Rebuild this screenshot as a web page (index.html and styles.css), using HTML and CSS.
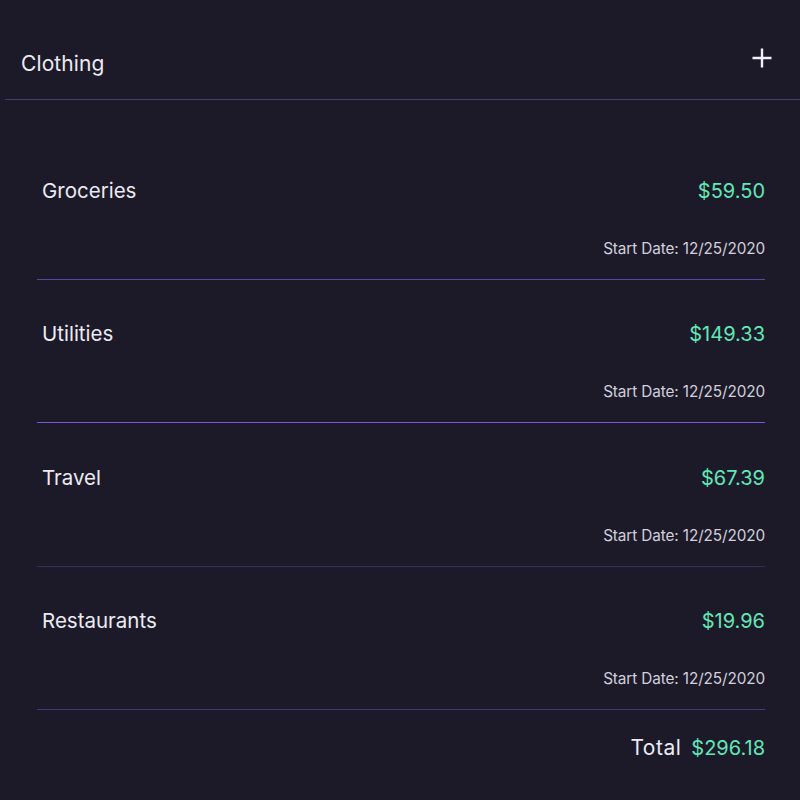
FILE: index.html
```html
<!DOCTYPE html>
<html>
<head>
<meta charset="utf-8">
<link rel="stylesheet" href="styles.css">
</head>
<body>
<div class="page">
  <header class="header">
    <h1 class="header-title">Clothing</h1>
    <button class="add-btn" aria-label="Add">
      <svg width="22" height="22" viewBox="0 0 22 22"><path d="M11 1.5V20.5M1.5 11H20.5" stroke="#f2f0f8" stroke-width="2.4" fill="none"/></svg>
    </button>
  </header>
  <ul class="list">
    <li class="row sep-1">
      <div class="row-top"><span class="name">Groceries</span><span class="amount">$59.50</span></div>
      <div class="date">Start Date: 12/25/2020</div>
    </li>
    <li class="row sep-2">
      <div class="row-top"><span class="name">Utilities</span><span class="amount">$149.33</span></div>
      <div class="date">Start Date: 12/25/2020</div>
    </li>
    <li class="row sep-3">
      <div class="row-top"><span class="name">Travel</span><span class="amount">$67.39</span></div>
      <div class="date">Start Date: 12/25/2020</div>
    </li>
    <li class="row sep-4">
      <div class="row-top"><span class="name">Restaurants</span><span class="amount">$19.96</span></div>
      <div class="date">Start Date: 12/25/2020</div>
    </li>
  </ul>
  <div class="total"><span class="total-label">Total</span><span class="amount">$296.18</span></div>
</div>
</body>
</html>
```
FILE: styles.css
```css
* { box-sizing: border-box; }
html, body {
  margin: 0;
  padding: 0;
  background: #1c1a29;
  font-family: Inter, "Noto Sans", sans-serif;
  color: #ecebf2;
}
.page {
  width: 800px;
  height: 800px;
}
.header {
  margin-left: 5px;
  height: 100px;
  padding: 50px 16px 0;
  display: flex;
  align-items: flex-start;
  justify-content: space-between;
  border-bottom: 1px solid #463f63;
}
.header-title {
  margin: 0;
  font-size: 21px;
  font-weight: 400;
  letter-spacing: 0.1px;
  line-height: 28px;
  color: #ecebf2;
}
.add-btn {
  background: none;
  border: 0;
  padding: 0;
  width: 22px;
  height: 22px;
  margin-top: -3px;
  margin-right: 11px;
  display: flex;
}
.list {
  list-style: none;
  margin: 37px 35px 0 37px;
  padding: 0;
}
.row {
  padding: 40px 0 20px 5px;
  border-bottom: 1px solid #4c3f7a;
}
.row.sep-1 { border-bottom-color: #5a46a0; }
.row.sep-2 { border-bottom-color: #7a55d6; }
.row.sep-3 { border-bottom-color: #372a5c; }
.row.sep-4 { border-bottom-color: #48367e; }
.row.sep-2 + .row { padding-top: 41px; }
.row-top {
  display: flex;
  justify-content: space-between;
  align-items: center;
  height: 28px;
}
.name {
  font-size: 20.5px;
  line-height: 28px;
  color: #ecebf2;
}
.amount {
  font-size: 20px;
  line-height: 28px;
  color: #62e7b6;
}
.date {
  margin-top: 34px;
  text-align: right;
  font-size: 15.3px;
  line-height: 20px;
  color: #d2d0da;
  letter-spacing: -0.1px;
}
.total {
  margin: 24px 35px 0 37px;
  display: flex;
  justify-content: flex-end;
  align-items: center;
  gap: 10px;
  line-height: 28px;
}
.total-label {
  font-size: 21px;
  letter-spacing: 0.5px;
  color: #ecebf2;
}
```
